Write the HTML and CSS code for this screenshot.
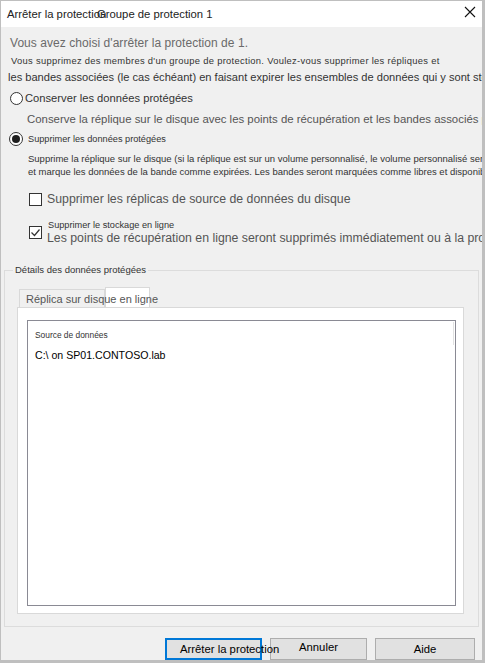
FILE: index.html
```html
<!DOCTYPE html>
<html lang="fr">
  <head>
    <meta charset="UTF-8" />
    <meta name="viewport" content="width=device-width, initial-scale=1.0" />
    <title>Arrêter la protection</title>
    <link rel="stylesheet" href="styles.css">
  </head>

  <body>
    <div class="window">
      <!-- Title bar -->
      <div class="titlebar">
        <span class="title">
          <span class="title-a">Arrêter la protection</span><span class="title-b">Groupe de protection 1</span>
        </span>
        <svg class="close" width="12" height="12" viewBox="0 0 12 12">
          <path d="M1 1 L11 11 M11 1 L1 11" stroke="#111" stroke-width="1.1" fill="none" />
        </svg>
      </div>

      <div class="content">
        <p class="heading">Vous avez choisi d'arrêter la protection de 1.</p>
        <p class="intro-small">Vous supprimez des membres d'un groupe de protection. Voulez-vous supprimer les répliques et</p>
        <p class="intro">les bandes associées (le cas échéant) en faisant expirer les ensembles de données qui y sont stockés ?</p>

        <!-- Option: keep -->
        <label class="radio-row keep">
          <span class="radio"></span>
          <span class="radio-label">Conserver les données protégées</span>
        </label>
        <p class="option-desc">Conserve la réplique sur le disque avec les points de récupération et les bandes associés pour</p>

        <!-- Option: delete -->
        <label class="radio-row remove">
          <span class="radio checked"></span>
          <span class="radio-label small">Supprimer les données protégées</span>
        </label>
        <p class="option-desc small">Supprime la réplique sur le disque (si la réplique est sur un volume personnalisé, le volume personnalisé sera<br>et marque les données de la bande comme expirées. Les bandes seront marquées comme libres et disponibles</p>

        <div class="check-row first">
          <span class="checkbox"></span>
          <span class="check-label">Supprimer les réplicas de source de données du disque</span>
        </div>
        <div class="check-row second">
          <span class="checkbox">
            <svg width="11" height="11" viewBox="0 0 11 11">
              <path d="M1.5 5.5 L4.5 8.5 L9.5 2.5" stroke="#333" stroke-width="1.2" fill="none" />
            </svg>
          </span>
          <span class="check-text">
            <span class="check-title">Supprimer le stockage en ligne</span>
            <span class="check-label">Les points de récupération en ligne seront supprimés immédiatement ou à la prochaine</span>
          </span>
        </div>

        <!-- Details group -->
        <fieldset class="details">
          <legend>Détails des données protégées</legend>
          <div class="tabs">
            <div class="tab"><span class="tab-text">Réplica sur disque en ligne</span></div>
            <div class="tab active"></div>
          </div>
          <div class="tab-panel">
            <div class="list">
              <div class="list-head">
                <span>Source de données</span>
                <span class="col-line"></span>
              </div>
              <div class="list-item">C:\ on SP01.CONTOSO.lab</div>
            </div>
          </div>
        </fieldset>

        <div class="buttons">
          <button class="btn default"><span>Arrêter la protection</span></button>
          <button class="btn cancel">Annuler</button>
          <button class="btn help">Aide</button>
        </div>
      </div>
    </div>
  </body>
</html>
```

FILE: styles.css
```css
* {
  box-sizing: border-box;
}

body {
  margin: 0;
  padding: 1px 0 0 1px;
  background: #bfbfbf;
  font-family: "Liberation Sans", Arial, sans-serif;
  color: #222;
}

.window {
  width: 481px;
  height: 659px;
  background: #f0f0f0;
  overflow: hidden;
  display: flex;
  flex-direction: column;
}

.titlebar {
  height: 26px;
  flex-shrink: 0;
  background: #fff;
  display: flex;
  align-items: center;
  justify-content: space-between;
  padding: 0 6px 0 6px;
  font-size: 11.3px;
  color: #222;
  white-space: nowrap;
}

.title-a {
  display: inline-block;
  width: 90px;
  overflow: visible;
}

.close {
  margin-top: -4px;
}

.content {
  flex: 1;
  display: flex;
  flex-direction: column;
  padding: 0 0 0 3px;
  white-space: nowrap;
}

p {
  margin: 0;
}

.heading {
  font-size: 12px;
  line-height: 16px;
  letter-spacing: 0.05px;
  color: #6a6a6a;
  margin: 8px 0 0 6px;
}

.intro-small {
  font-size: 9.4px;
  line-height: 12px;
  letter-spacing: 0.3px;
  color: #333;
  margin: 4px 0 0 7px;
}

.intro {
  font-size: 11.1px;
  line-height: 14px;
  color: #333;
  margin: 3px 0 0 4px;
}

.radio-row {
  display: flex;
  align-items: center;
  height: 14px;
  gap: 2px;
  margin-left: 6px;
}

.radio-row.keep {
  margin-top: 7px;
}

.radio-row.remove {
  margin-top: 6px;
  gap: 5px;
  margin-left: 5px;
}

.radio {
  width: 13px;
  height: 13px;
  border: 1px solid #333;
  border-radius: 50%;
  background: #fff;
  display: flex;
  align-items: center;
  justify-content: center;
  flex-shrink: 0;
}

.radio.checked {
  width: 14px;
  height: 14px;
}

.radio.checked::after {
  content: "";
  width: 8px;
  height: 8px;
  border-radius: 50%;
  background: #1e1e1e;
}

.radio-label {
  font-size: 11.2px;
  color: #333;
}

.radio-label.small {
  font-size: 9.2px;
}

.option-desc {
  font-size: 11.4px;
  line-height: 14px;
  color: #555;
  margin: 7px 0 0 23px;
}

.option-desc.small {
  font-size: 9.5px;
  line-height: 13px;
  color: #333;
  margin: 6px 0 0 24px;
}

.check-row {
  display: flex;
  align-items: flex-start;
  gap: 5px;
  margin-left: 25px;
}

.check-row.first {
  margin-top: 14px;
  height: 14px;
  align-items: center;
}

.check-row.second {
  margin-top: 14px;
}

.checkbox {
  width: 13px;
  height: 13px;
  border: 1px solid #333;
  background: #fff;
  display: flex;
  align-items: center;
  justify-content: center;
  flex-shrink: 0;
}

.check-row.second .checkbox {
  margin-top: 6px;
}

.check-text {
  display: flex;
  flex-direction: column;
}

.check-title {
  font-size: 9.2px;
  color: #333;
  line-height: 11px;
  margin-left: 1px;
}

.check-label {
  font-size: 12.3px;
  color: #555;
  line-height: 14px;
}

.details {
  margin: 19px 3px 0 0;
  padding: 11px 14px 12px 12px;
  border: 1px solid #dcdcdc;
  min-width: 0;
  flex: 1;
  display: flex;
  flex-direction: column;
}

.details legend {
  font-size: 9.5px;
  line-height: 12px;
  color: #333;
  padding: 0 2px;
  margin-left: -4px;
}

.tabs {
  display: flex;
  align-items: flex-end;
  margin-left: 2px;
  height: 20px;
  flex-shrink: 0;
}

.tab {
  width: 86px;
  height: 18px;
  border: 1px solid #d9d9d9;
  border-bottom: none;
  background: #f0f0f0;
  font-size: 11px;
  line-height: 14px;
  color: #555;
  padding: 2px 0 0 6px;
}

.tab.active {
  width: 45px;
  height: 20px;
  background: #fff;
  padding: 0;
}

.tab-text {
  position: relative;
  z-index: 1;
}

.tab-panel {
  flex: 1;
  background: #fff;
  border: 1px solid #d9d9d9;
  padding: 12px 7px 7px 9px;
  display: flex;
}

.list {
  flex: 1;
  border: 1px solid #8a8a94;
  background: #fff;
}

.list-head {
  position: relative;
  font-size: 8.4px;
  line-height: 10px;
  color: #333;
  padding: 9px 0 0 7px;
  height: 25px;
}

.col-line {
  position: absolute;
  right: 1px;
  top: 1px;
  width: 1px;
  height: 23px;
  background: #e2e2e2;
}

.list-item {
  font-size: 10.6px;
  line-height: 14px;
  color: #000;
  padding: 2px 0 0 7px;
}

.buttons {
  display: flex;
  justify-content: flex-end;
  gap: 8px;
  padding: 0 7px 0 0;
  margin-top: 11px;
  height: 22px;
  flex-shrink: 0;
}

.btn {
  height: 22px;
  width: 97px;
  background: #e1e1e1;
  border: 1px solid #adadad;
  font-family: "Liberation Sans", Arial, sans-serif;
  font-size: 11.3px;
  color: #000;
  padding: 0;
  overflow: visible;
  white-space: nowrap;
}

.btn.default {
  border: 2px solid #0078d7;
  padding-left: 13px;
  text-align: left;
}

.btn.default span {
  position: relative;
  z-index: 1;
}

.btn.cancel {
  padding-bottom: 5px;
}

.btn.help {
  width: 100px;
}
```
